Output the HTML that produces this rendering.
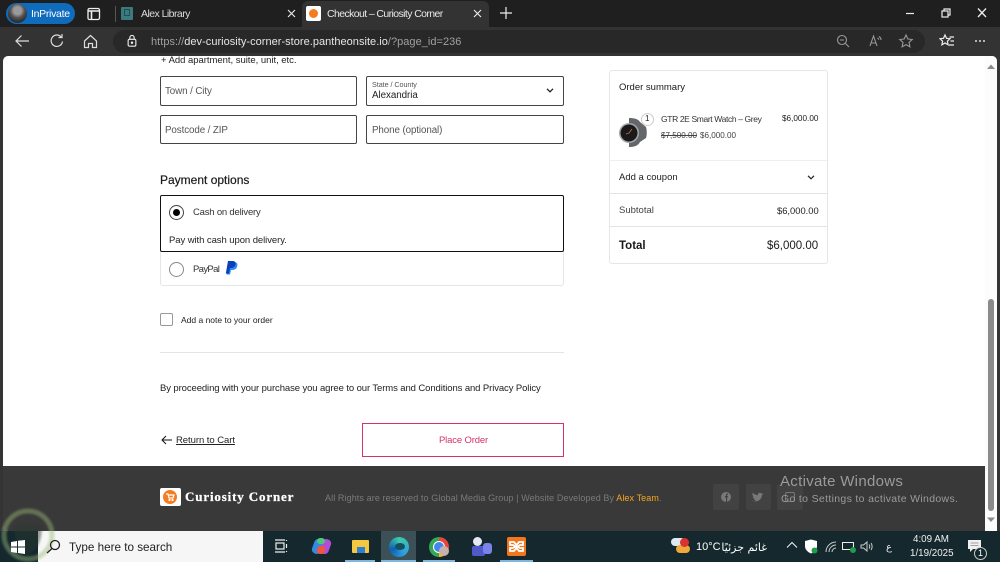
<!DOCTYPE html>
<html lang="en"><head><meta charset="utf-8"><title>Checkout – Curiosity Corner</title>
<style>
html,body{margin:0;padding:0;background:#333}
#r{position:relative;width:1000px;height:562px;overflow:hidden;background:#343434;font-family:"Liberation Sans","Noto Sans CJK SC",sans-serif;color:#1a1a1a}
#r div,#r span.t,#r svg{position:absolute}
.t{white-space:nowrap;line-height:1}
.box{box-sizing:border-box;border:1px solid #444;border-radius:2px;background:#fff}
</style></head><body><div id="r">
<!-- tab strip -->
<div style="left:0;top:0;width:1000px;height:27px;background:#1f1f1f"></div>
<div style="left:6px;top:3px;width:69px;height:21px;border-radius:11px;background:#0f6cbd"></div>
<div style="left:8px;top:4px;width:19px;height:19px;border-radius:50%;background:radial-gradient(circle at 50% 35%,#9a9a9a 0 25%,#555 45%,#2a2a2a 75%)"></div>
<span class="t" style="left:31px;top:8.500px;font-size:10.5px;letter-spacing:-.3px;color:#fff">InPrivate</span>
<svg style="left:87px;top:7px" width="14" height="14" viewBox="0 0 14 14" fill="none" stroke="#eee" stroke-width="1.3"><rect x="1" y="1.5" width="11.500" height="11" rx="1.500"/><path d="M1 4h11.500M4.500 4v8.500" stroke-width="1.600"/></svg>
<div style="left:115px;top:6px;width:1px;height:16px;background:#555"></div>
<div style="left:121px;top:7px;width:12px;height:13px;background:#3c7a80;border-radius:1px"></div>
<div style="left:124px;top:9px;width:6px;height:7px;border:1px solid #1f4f55;box-sizing:border-box"></div>
<span class="t" style="left:141px;top:8.500px;font-size:10.500px;letter-spacing:-.55px;color:#ddd">Alex Library</span>
<svg style="left:286px;top:8px" width="11" height="11" viewBox="0 0 11 11" stroke="#eee" stroke-width="1.100"><path d="M2 2l7 7M9 2l-7 7"/></svg>
<div style="left:302px;top:1px;width:187px;height:26px;background:#333;border-radius:6px 6px 0 0"></div>
<div style="left:306px;top:6px;width:15px;height:15px;background:#fff;border-radius:2px"></div>
<div style="left:309px;top:9px;width:9px;height:9px;background:#f47b20;border-radius:50%"></div>
<span class="t" style="left:327px;top:8.500px;font-size:10.500px;letter-spacing:-.6px;color:#e8e8e8">Checkout – Curiosity Corner</span>
<svg style="left:472px;top:8px" width="11" height="11" viewBox="0 0 11 11" stroke="#eee" stroke-width="1.100"><path d="M2 2l7 7M9 2l-7 7"/></svg>
<svg style="left:499px;top:6px" width="14" height="14" viewBox="0 0 14 14" stroke="#eee" stroke-width="1.200"><path d="M7 1v12M1 7h12"/></svg>
<svg style="left:900px;top:6px" width="90" height="14" viewBox="0 0 90 14" fill="none" stroke="#eee" stroke-width="1.200"><path d="M6 7.500h8"/><rect x="42" y="5" width="6" height="6"/><path d="M44 5V3h6v6h-2"/><path d="M78 2.500l8 8.500M86 2.500l-8 8.500" stroke-width="1.300"/></svg>
<!-- toolbar -->
<div style="left:0;top:27px;width:1000px;height:29px;background:#333"></div>
<div style="left:113px;top:30px;width:812px;height:23px;border-radius:12px;background:#282828"></div>
<svg style="left:14px;top:33px" width="16" height="16" viewBox="0 0 16 16" fill="none" stroke="#ddd" stroke-width="1.200"><path d="M15 8H2M7.500 2.500L2 8l5.500 5.500"/></svg>
<svg style="left:49px;top:33px" width="16" height="16" viewBox="0 0 16 16" fill="none" stroke="#ddd" stroke-width="1.200"><path d="M13.500 8.500A5.700 5.700 0 1 1 12 3.800M13 1v3.500H9.500"/></svg>
<svg style="left:83px;top:34px" width="15" height="15" viewBox="0 0 15 15" fill="none" stroke="#ddd" stroke-width="1.200"><path d="M1.500 7L7.500 1.500 13.500 7v6.500h-4v-4h-4v4h-4z"/></svg>
<svg style="left:126px;top:34px" width="12" height="14" viewBox="0 0 14 16" fill="none" stroke="#eee" stroke-width="1.300"><rect x="2.500" y="6" width="9" height="8" rx="1.500"/><path d="M4.500 6V4a2.500 2.500 0 0 1 5 0v2"/><circle cx="7" cy="10" r=".8" fill="#eee"/></svg>
<span class="t" style="left:151px;top:36.500px;font-size:11px;letter-spacing:.03px;color:#a0a0a0">https://<span style="color:#e6e6e6">dev-curiosity-corner-store.pantheonsite.io</span>/?page_id=236</span>
<svg style="left:836px;top:33px" width="80" height="16" viewBox="0 0 80 16" fill="none" stroke="#999" stroke-width="1.100"><circle cx="6" cy="7" r="4.500"/><path d="M9.500 10.500L13 14M4 7h4"/><path d="M34 13l3.500-10 3.500 10M35.200 10h4.600M43 3.500a4 4 0 0 1 2 3.500M41.500 5a2 2 0 0 1 1.200 1.700"/><path d="M70 2l1.900 4 4.300.5-3.200 3 .9 4.300-3.900-2.200-3.900 2.200.9-4.300-3.200-3 4.300-.5z"/></svg>
<svg style="left:939px;top:33px" width="16" height="16" viewBox="0 0 16 16" fill="none" stroke="#eee" stroke-width="1.200"><path d="M6 2l1.500 3.300 3.500.4-2.600 2.500.7 3.600L6 10l-3.100 1.800.7-3.600L1 5.700l3.500-.4zM10.500 4h4.500M11.500 8h3.500M10 12h5"/></svg>
<svg style="left:974px;top:39px" width="12" height="4" viewBox="0 0 12 4" fill="#ddd"><circle cx="2" cy="2" r="1"/><circle cx="6" cy="2" r="1"/><circle cx="10" cy="2" r="1"/></svg>
<!-- page -->
<div style="left:3px;top:56px;width:994px;height:475px;background:#fff;border-radius:5px 5px 0 5px;overflow:hidden">
  <div style="left:982px;top:0;width:12px;height:475px;background:#fcfcfc"></div>
  <div style="left:0;top:410px;width:982px;height:65px;background:#393939"></div>
  <div style="left:985px;top:243px;width:6px;height:212px;border-radius:3px;background:#8a8a8a"></div>
  <svg style="left:984px;top:8px" width="9" height="6"><path d="M0 5L4 .5 8 5z" fill="#8a8a8a"/></svg>
  <svg style="left:984px;top:461px" width="9" height="6"><path d="M0 .5L4 5 8 .5z" fill="#8a8a8a"/></svg>
</div>
<span class="t" style="left:161px;top:56px;font-size:9.500px;letter-spacing:-.03px;color:#222">+ Add apartment, suite, unit, etc.</span>
<div class="box" style="left:160px;top:76px;width:197px;height:30px"></div>
<span class="t" style="left:165px;top:87px;font-size:9.800px;letter-spacing:-.1px;color:#555">Town / City</span>
<div class="box" style="left:366px;top:76px;width:198px;height:30px"></div>
<span class="t" style="left:372px;top:80.500px;font-size:7.200px;letter-spacing:-.05px;color:#555">State / County</span>
<span class="t" style="left:372px;top:91px;font-size:9.800px;letter-spacing:-.05px;color:#222">Alexandria</span>
<svg style="left:546px;top:88px" width="8" height="5" fill="none" stroke="#222" stroke-width="1.300"><path d="M1 .8l3 3 3-3"/></svg>
<div class="box" style="left:160px;top:115px;width:197px;height:29px"></div>
<span class="t" style="left:165px;top:126px;font-size:9.800px;letter-spacing:-.1px;color:#555">Postcode / ZIP</span>
<div class="box" style="left:366px;top:115px;width:198px;height:29px"></div>
<span class="t" style="left:372px;top:126px;font-size:9.800px;letter-spacing:-.1px;color:#555">Phone (optional)</span>
<span class="t" style="left:160px;top:174px;font-size:12px;color:#1a1a1a;-webkit-text-stroke:.2px #1a1a1a">Payment options</span>
<div style="left:160px;top:250px;width:404px;height:36px;box-sizing:border-box;border:1px solid #e6e6e6;border-radius:0 0 3px 3px"></div>
<div style="left:160px;top:195px;width:404px;height:57px;box-sizing:border-box;border:1px solid #111;border-radius:2px;background:#fff"></div>
<div style="left:169px;top:205px;width:15px;height:15px;box-sizing:border-box;border:1px solid #444;border-radius:50%"></div>
<div style="left:173px;top:209px;width:7px;height:7px;background:#000;border-radius:50%"></div>
<span class="t" style="left:193px;top:208px;font-size:9.500px;letter-spacing:-.2px;color:#333">Cash on delivery</span>
<span class="t" style="left:169px;top:236px;font-size:9.500px;letter-spacing:-.07px;color:#222">Pay with cash upon delivery.</span>
<div style="left:169px;top:262px;width:15px;height:15px;box-sizing:border-box;border:1px solid #888;border-radius:50%"></div>
<span class="t" style="left:193px;top:264.500px;font-size:9.500px;letter-spacing:-.65px;color:#333">PayPal</span>
<svg style="left:225px;top:261px" width="13" height="15" viewBox="0 0 13 15"><path d="M4 1h5c2.500 0 3.800 1.500 3.300 4-.5 2.500-2.500 4-5 4H6l-1 4.500H1.500z" fill="#2a8fe8"/><path d="M3 0h4.500C9.800 0 11 1.300 10.500 3.500 10 5.800 8.200 7 6 7H5l-1 5.500H.8z" fill="#0a3fbf"/></svg>
<div style="left:160px;top:313px;width:13px;height:13px;box-sizing:border-box;border:1px solid #999;border-radius:2px;background:#fff"></div>
<span class="t" style="left:181px;top:316px;font-size:8.500px;color:#222">Add a note to your order</span>
<div style="left:160px;top:352px;width:404px;height:1px;background:#e4e4e4"></div>
<span class="t" style="left:160px;top:384px;font-size:9.500px;letter-spacing:-.1px;color:#222">By proceeding with your purchase you agree to our Terms and Conditions and Privacy Policy</span>
<svg style="left:161px;top:435px" width="12" height="10" fill="none" stroke="#111" stroke-width="1"><path d="M11 5H1M5 1L1 5l4 4"/></svg>
<span class="t" style="left:176px;top:436px;font-size:9.500px;letter-spacing:-.05px;color:#222;text-decoration:underline">Return to Cart</span>
<div style="left:362px;top:423px;width:202px;height:34px;box-sizing:border-box;border:1px solid #d4336f;background:#fff"></div>
<span class="t" style="left:439px;top:436px;font-size:9.500px;letter-spacing:-.15px;color:#d4336f">Place Order</span>
<!-- summary -->
<div style="left:609px;top:70px;width:219px;height:194px;box-sizing:border-box;border:1px solid #e6e6e6;border-radius:3px"></div>
<span class="t" style="left:619px;top:83px;font-size:9.500px;color:#1a1a1a">Order summary</span>
<svg style="left:619px;top:117px" width="29" height="31" viewBox="0 0 29 31"><path d="M10 1c5 0 9 1 11 4l6 5c1 3 1 8 0 11l-6 4c-2 4-6 5-11 5z" fill="#63666a"/><circle cx="10" cy="16" r="10" fill="#a8a8a8"/><circle cx="10" cy="16" r="8.500" fill="#1a1a1d"/><path d="M10 16l3-4M10 16l-3 1" stroke="#c9753a" stroke-width=".8"/></svg>
<div style="left:641px;top:113px;width:13px;height:13px;box-sizing:border-box;border:1px solid #ccc;border-radius:50%;background:#fff"></div>
<span class="t" style="left:645px;top:115px;font-size:8px;color:#222">1</span>
<span class="t" style="left:661px;top:115px;font-size:8.500px;letter-spacing:-.37px;color:#333">GTR 2E Smart Watch – Grey</span>
<span class="t" style="left:782px;top:115px;font-size:8.200px;color:#222">$6,000.00</span>
<span class="t" style="left:661px;top:132px;font-size:8.100px;color:#444;text-decoration:line-through">$7,500.00</span>
<span class="t" style="left:700px;top:132px;font-size:8.100px;color:#444">$6,000.00</span>
<div style="left:610px;top:160px;width:217px;height:1px;background:#eee"></div>
<span class="t" style="left:619px;top:173px;font-size:9.500px;color:#222">Add a coupon</span>
<svg style="left:807px;top:175px" width="8" height="5" fill="none" stroke="#222" stroke-width="1.200"><path d="M1 .8l3 3 3-3"/></svg>
<div style="left:610px;top:193px;width:217px;height:1px;background:#e4e4e4"></div>
<span class="t" style="left:619px;top:206px;font-size:9.500px;color:#444">Subtotal</span>
<span class="t" style="left:777px;top:206px;font-size:9.400px;color:#222">$6,000.00</span>
<div style="left:610px;top:226px;width:217px;height:1px;background:#e4e4e4"></div>
<span class="t" style="left:619px;top:240.500px;font-size:11.500px;font-weight:bold;color:#1a1a1a">Total</span>
<span class="t" style="left:767px;top:240.500px;font-size:11.500px;color:#1a1a1a">$6,000.00</span>
<!-- footer -->
<div style="left:160px;top:488px;width:21px;height:18px;background:#fff;border-radius:2px"></div>
<div style="left:163px;top:490px;width:14px;height:14px;background:#f47b20;border-radius:50%"></div>
<svg style="left:166px;top:493px" width="9" height="8" fill="none" stroke="#fff" stroke-width="1.200"><path d="M0 1h2l1 4h4l1-3H2.500"/><circle cx="3.500" cy="7" r=".5"/><circle cx="6.500" cy="7" r=".5"/></svg>
<span class="t" style="left:185px;top:489.500px;font-size:13px;font-family:'Liberation Serif',serif;font-weight:bold;color:#fff;letter-spacing:.85px;-webkit-text-stroke:.25px #fff">Curiosity Corner</span>
<span class="t" style="left:325px;top:493.500px;font-size:9px;color:#7a7a7a;letter-spacing:.1px">All Rights are reserved to Global Media Group | Website Developed By <span style="color:#f5a623">Alex Team</span>.</span>
<div style="left:713px;top:484px;width:26px;height:26px;background:#424242;border-radius:2px"></div>
<div style="left:746px;top:484px;width:25px;height:26px;background:#424242;border-radius:2px"></div>
<div style="left:777px;top:484px;width:26px;height:26px;background:#424242;border-radius:2px"></div>
<div style="left:721px;top:492px;width:10px;height:10px;border-radius:50%;background:#787878"></div>
<svg style="left:721px;top:492px" width="10" height="10"><path d="M5 10V5.500H4V4h1V3c0-1 .6-1.500 2-1.500v1.300c-.7 0-.9.200-.9.700V4H7l-.2 1.500h-.7V10z" fill="#424242"/></svg>
<svg style="left:752px;top:492px" width="12" height="10" viewBox="0 0 12 10"><path d="M0 8.500c4 2 9.500.5 10-5.500l1.500-1.500-1.700.3C9 .5 6 0 5.800 3.200 3.500 3 2 2 .8 .8 0 2.500.7 4 1.800 4.800L.8 4.500c0 1.300 1 2.300 2.200 2.700H2c.4 1 1.300 1.500 2.300 1.500-1.300.8-2.800 0-4.300-.2z" fill="#787878"/></svg>
<div style="left:785px;top:492px;width:10px;height:10px;border:1px solid #787878;box-sizing:border-box;border-radius:2px"></div>
<span class="t" style="left:780px;top:474px;font-size:15px;color:#9b9b9b;letter-spacing:.3px">Activate Windows</span>
<span class="t" style="left:781px;top:494px;font-size:10.500px;color:#9b9b9b;letter-spacing:.33px">Go to Settings to activate Windows.</span>
<!-- taskbar -->
<div style="left:0;top:531px;width:1000px;height:31px;background:#14282e"></div>
<div style="left:38px;top:531px;width:225px;height:31px;background:#f6f6f6"></div>
<svg style="left:0;top:504px;opacity:.45;filter:blur(1px)" width="58" height="58" viewBox="0 0 58 58" fill="none"><circle cx="28" cy="31" r="24" stroke="#9ab878" stroke-width="5"/><path d="M14 22c8-4 18-4 28 0 0 14-4 24-14 28C18 46 14 36 14 22z" fill="#2b3a30"/></svg>
<svg style="left:11px;top:540px" width="14" height="14" viewBox="0 0 14 14" fill="#fff"><path d="M0 2l6-1v5.500H0zM7 .8L14 0v6.500H7zM0 7.500h6V13l-6-1zM7 7.500h7V14l-7-1z"/></svg>
<svg style="left:46px;top:539px" width="15" height="15" viewBox="0 0 15 15" fill="none" stroke="#222" stroke-width="1.300"><circle cx="9" cy="6" r="4.500"/><path d="M6 9.500L1 14"/></svg>
<span class="t" style="left:69px;top:542px;font-size:11.700px;color:#222">Type here to search</span>
<svg style="left:274px;top:539px" width="15" height="14" fill="none" stroke="#eee" stroke-width="1.200"><path d="M1 1h10M1 13h10M12.500 1v1M12.500 5v4M12.500 12v1"/><rect x="2" y="4" width="8" height="6"/></svg>
<div style="left:313px;top:539px;width:9px;height:15px;background:#2f8ce0;border-radius:4px;transform:rotate(20deg)"></div>
<div style="left:321px;top:539px;width:9px;height:15px;background:#b04fd6;border-radius:4px;transform:rotate(20deg)"></div>
<div style="left:317px;top:546px;width:8px;height:8px;background:#f0553f;border-radius:3px"></div>
<div style="left:317px;top:538px;width:8px;height:6px;background:#4fc87a;border-radius:3px"></div>
<div style="left:352px;top:540px;width:17px;height:13px;background:#f5c842;border-radius:1px"></div>
<div style="left:357px;top:547px;width:8px;height:6px;background:#2d7fd3"></div>
<div style="left:345px;top:560px;width:30px;height:2px;background:#7fb6dc"></div>
<div style="left:381px;top:531px;width:35px;height:31px;background:#3b5157"></div>
<div style="left:381px;top:560px;width:35px;height:2px;background:#7fb6dc"></div>
<div style="left:389px;top:537px;width:20px;height:20px;border-radius:50%;background:conic-gradient(from 0deg,#3fc9a8,#2e9fe0 40%,#0f5fb0 70%,#3fc9a8)"></div>
<div style="left:395px;top:543px;width:10px;height:7px;border-radius:50%;background:#14505f"></div>
<div style="left:429px;top:537px;width:20px;height:20px;border-radius:50%;background:conic-gradient(#e8453c 0 33%,#f9bc15 33% 50%,#34a853 50% 100%)"></div>
<div style="left:434px;top:542px;width:10px;height:10px;border-radius:50%;background:#4285f4;outline:1.500px solid #fff"></div>
<div style="left:439px;top:546px;width:10px;height:10px;border-radius:50%;background:#c9b0a8"></div>
<div style="left:423px;top:560px;width:32px;height:2px;background:#7fb6dc"></div>
<div style="left:473px;top:537px;width:9px;height:9px;border-radius:50%;background:#e8e8f0"></div>
<div style="left:472px;top:546px;width:13px;height:10px;background:#5059c9;border-radius:2px"></div>
<div style="left:483px;top:543px;width:9px;height:11px;background:#7b83eb;border-radius:3px"></div>
<div style="left:507px;top:537px;width:19px;height:19px;background:#f2761e;border-radius:2px"></div>
<svg style="left:509px;top:540px" width="15" height="13" fill="none" stroke="#fff" stroke-width="1.800"><path d="M1 2h4l2.500 3L10 2h4v3h-3L8.500 6.500 11 8h3v3h-4L7.500 8 5 11H1V8h3l2.500-1.500L4 5H1z"/></svg>
<div style="left:500px;top:560px;width:33px;height:2px;background:#7fb6dc"></div>
<div style="left:671px;top:538px;width:14px;height:8px;background:#dfe8ef;border-radius:4px"></div>
<div style="left:676px;top:545px;width:14px;height:8px;background:#f0a83a;border-radius:4px"></div>
<div style="left:680px;top:538px;width:9px;height:9px;background:#d83232;border-radius:50%"></div>
<span class="t" style="left:696px;top:542px;font-size:11px;color:#fff">10°C</span>
<span class="t" style="left:725px;top:542px;font-size:11px;color:#fff;font-family:'DejaVu Sans',sans-serif;direction:rtl;width:42px">غائم جزئيًا</span>
<svg style="left:786px;top:541px" width="12" height="8" fill="none" stroke="#eee" stroke-width="1.100"><path d="M1 6.500l5-5 5 5"/></svg>
<svg style="left:804px;top:539px" width="14" height="15" viewBox="0 0 14 15"><path d="M1 2l6-1.500L13 2v5c0 3.500-2.500 6-6 7.500C3.500 13 1 10.500 1 7z" fill="#fff"/><circle cx="10.500" cy="11.500" r="3" fill="#1f9e4a"/></svg>
<svg style="left:824px;top:540px" width="13" height="13" fill="none" stroke="#ccc" stroke-width="1"><path d="M2 12a10 10 0 0 1 10-10M5 12a7 7 0 0 1 7-7M8 12a4 4 0 0 1 4-4"/></svg>
<div style="left:842px;top:542px;width:12px;height:8px;box-sizing:border-box;border:1px solid #eee"></div>
<div style="left:850px;top:547px;width:6px;height:6px;border-radius:50%;background:#1f9e4a"></div>
<svg style="left:860px;top:541px" width="13" height="11" fill="none" stroke="#ccc" stroke-width="1"><path d="M1 4h2.500L7 1v9L3.500 7H1zM9 3.500c1 1 1 3 0 4M11 2c1.500 2 1.500 5 0 7"/></svg>
<span class="t" style="left:886px;top:543px;font-size:10px;color:#eee;font-family:'DejaVu Sans',sans-serif">ع</span>
<span class="t" style="left:913px;top:535px;font-size:9.800px;color:#f0f0f0">4:09 AM</span>
<span class="t" style="left:910px;top:549px;font-size:9.800px;color:#f0f0f0">1/19/2025</span>
<svg style="left:967px;top:539px" width="15" height="14" viewBox="0 0 15 14"><path d="M1 1h13v9H6l-3 3v-3H1z" fill="#f0f0f0"/><path d="M3.500 4h8M3.500 6.500h8" stroke="#888" stroke-width=".8"/></svg>
<div style="left:974px;top:547px;width:13px;height:13px;box-sizing:border-box;border:1px solid #ccc;border-radius:50%;background:#14282e"></div>
<span class="t" style="left:978px;top:549px;font-size:9px;color:#fff">1</span>
</div></body></html>
